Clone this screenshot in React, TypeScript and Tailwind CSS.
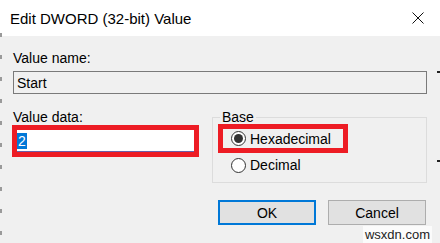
import React from "react";

const font = { fontFamily: '"Liberation Sans", Arial, sans-serif' };

function Radio({ checked }: { checked?: boolean }) {
  return (
    <span className="w-[15px] h-[15px] rounded-full border border-[#333] bg-white flex items-center justify-center shrink-0">
      {checked && <span className="w-[9px] h-[9px] rounded-full bg-[#333]" />}
    </span>
  );
}

export default function App() {
  return (
    <div className="relative w-[440px] h-[243px] overflow-hidden bg-[#f0f0f0] text-black" style={font}>
      {/* title bar */}
      <div className="h-[36px] bg-white flex items-center justify-between pl-[10px] pr-[16px]">
        <span className="text-[15px] leading-none">Edit DWORD (32-bit) Value</span>
        <svg width="12" height="12" viewBox="0 0 12 12" className="shrink-0">
          <path d="M0.5 0.5 L11.5 11.5 M11.5 0.5 L0.5 11.5" stroke="#111" strokeWidth="1" />
        </svg>
      </div>

      <div className="px-[13px] pt-[14px] text-[14px] leading-[16px]">
        <div>Value name:</div>
        <div className="mt-[5px] h-[23px] border border-[#7a7a7a] flex items-center pl-[3px]">Start</div>

        <div className="mt-[15px] flex items-start justify-between">
          <div className="w-[187px] -ml-[1px]">
            <div className="pl-[1px]">Value data:</div>
            <div className="h-[32px] border-[5px] border-[#ed1c24] bg-white flex items-center">
              <div className="flex-1 h-full border-b border-[#6b5fa8] flex items-center pl-[0px]">
                <span className="bg-[#0078d7] text-white px-[1px]">2</span>
              </div>
            </div>
          </div>

          <fieldset className="w-[215px] border border-[#dcdcdc] pb-[9px] px-[5px]">
            <legend className="ml-[2px] px-[2px]">Base</legend>
            <div className="-mt-[1px] w-[130px] h-[29px] border-[5px] border-[#ed1c24] flex items-center pl-[8px] gap-[4px]">
              <Radio checked />
              <span>Hexadecimal</span>
            </div>
            <div className="mt-[4px] h-[16px] flex items-center pl-[13px] gap-[4px]">
              <Radio />
              <span>Decimal</span>
            </div>
          </fieldset>
        </div>

        <div className="mt-[17px] flex justify-end gap-[12px] pr-[1px]">
          <button className="w-[98px] h-[25px] border-2 border-[#0078d7] bg-[#e1e1e1] text-[14px]">OK</button>
          <button className="w-[98px] h-[25px] border border-[#adadad] bg-[#e1e1e1] text-[14px]">Cancel</button>
        </div>
      </div>

      {/* window edge artifacts */}
      <div className="absolute left-0 top-[33px] bottom-0 w-[2px] bg-[repeating-linear-gradient(to_bottom,#9a9a9a_0_4px,transparent_4px_22px)]" />
      <span className="absolute right-0 top-[71px] w-[3px] h-[2px] bg-[#222]" />
      <span className="absolute right-0 top-[160px] w-[3px] h-[2px] bg-[#222]" />

      {/* watermark */}
      <div className="absolute right-[8px] bottom-0 h-[17px] px-[2px] bg-white/70 text-[13px] leading-[17px] text-[#222]">
        wsxdn.com
      </div>
    </div>
  );
}
